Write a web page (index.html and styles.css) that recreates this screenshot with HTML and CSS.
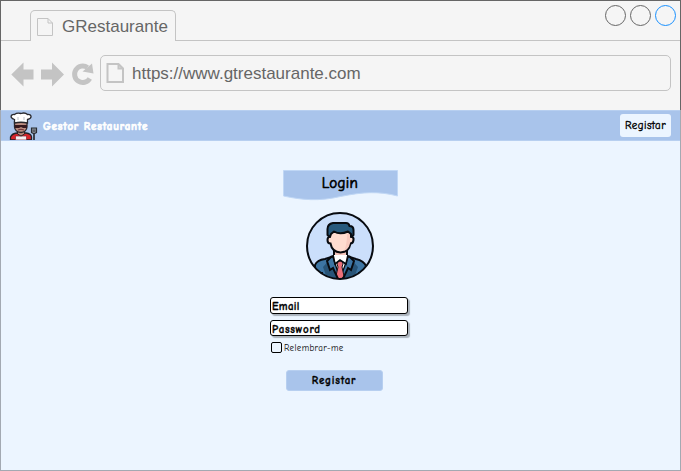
FILE: index.html
```
<!DOCTYPE html>
<html lang="pt">
<head>
<meta charset="utf-8">
<title>GRestaurante</title>
<link rel="stylesheet" href="styles.css">
</head>
<body>
<div class="window">
  <header class="chrome">
    <div class="tabs">
      <div class="tab">
        <svg class="tab-icon" width="17" height="20" viewBox="0 0 17 20"><path d="M.5 1.500H11L15.500 6V18.500H.5ZM11 1.500V6H15.500"/></svg>
        <span>GRestaurante</span>
      </div>
      <div class="tab-rest">
        <i class="circle"></i><i class="circle"></i><i class="circle active"></i>
      </div>
    </div>
    <div class="toolbar">
      <svg class="nav" width="88" height="28" viewBox="0 0 88 28">
        <path d="M.3 14.500 12.500 2.500V9.500H22.500V19.500H12.500V26.500Z"/>
        <path d="M53 14.500 41 2.500V9.500H30V19.500H41V26.500Z"/>
        <path class="reload" d="M78.800 18.500A8.200 8.200 0 1 1 76.500 7.500"/>
        <path d="M81 3.500 82.500 13.500 71.500 11.500Z"/>
      </svg>
      <div class="address">
        <svg class="page-icon" width="19" height="22" viewBox="0 0 19 22"><path d="M1.500 2H12.500L17 6.500V20H1.500ZM12.500 2V6.500H17"/></svg>
        <span>https://www.gtrestaurante.com</span>
      </div>
    </div>
  </header>
  <div class="page">
  <div class="appbar">
    <svg class="chef" width="30" height="28" viewBox="0 0 30 28">
      <path d="M1.500 28V25Q3 21.500 8 21H17Q22 21.500 22.500 25V28Z" fill="#d9242b" stroke="#202228" stroke-width="1.300"/>
      <path d="M6.500 28V24H17.500V28Z" fill="#f4eff3" stroke="#8e1e2b" stroke-width=".7"/>
      <path d="M8.500 19H15.500V22L12 24 8.500 22Z" fill="#b98579" stroke="#292529"/>
      <path d="M5.500 10H18V15Q17.500 20 12 20.500 6 20 5.500 15Z" fill="#b98c80" stroke="#29272c" stroke-width="1.300"/>
      <path d="M6 13H18V16H14L12 15 10 16H6Z" fill="#35181e"/>
      <path d="M9 18Q12 16.500 15 18" fill="none" stroke="#6b3035"/>
      <path d="M5.500 11V7.500C.5 6 1.500 2 5.500 2.500 8 .5 10 1 12 1.500 15 .5 17 1 18.500 2.500 23 2 23.500 6.500 18.500 7.500V11Q12 9.500 5.500 11Z" fill="#fff" stroke="#29292e" stroke-width="1.300"/>
      <path d="M9 5V8M15 5V8" stroke="#bbc0c8" fill="none"/>
      <path d="M22.500 16H27.500V20.500Q25 22.500 22.500 20.500Z" fill="#8b929b" stroke="#292c32" stroke-width="1.200"/>
      <path d="M24.200 17.500V20M25.800 17.500V20" stroke="#292c32" stroke-width=".7"/>
      <path d="M25 21.500V28" stroke="#292c32" stroke-width="1.700"/>
    </svg>
    <span class="brand">Gestor Restaurante</span>
    <button class="register-small">Registar</button>
  </div>
  <main>
    <div class="banner">
      <svg class="wave" width="115" height="32" viewBox="0 0 115 32"><path d="M.5.500H114.500V26C96 21 79 22 57.500 26.500 36 31.500 19 30 .5 26Z"/></svg>
      <span>Login</span>
    </div>
    <svg class="avatar" width="70" height="70" viewBox="0 0 70 70">
      <defs><clipPath id="disc"><circle cx="35" cy="35" r="33"/></clipPath></defs>
      <circle cx="35" cy="35" r="33" fill="#cbdffb"/>
      <g clip-path="url(#disc)">
        <path d="M48 0A40 40 0 0 1 53 64L70 70V0Z" fill="#bdd5f8"/>
        <path d="M10 70V54Q12 49 20 48L29 45 35 50 42 45 51 48Q59 50 61 55V70Z" fill="#3d75a3" stroke="#080b10" stroke-width="2"/>
        <path d="M29 38V46L35 52 42 46V38Z" fill="#f5c5bb" stroke="#080b10" stroke-width="2"/>
        <path d="M28 46 35 68 43 46 35 50Z" fill="#fff" stroke="#080b10" stroke-width="1.300"/>
        <path d="M33 50H37.500L38 53 37 56 39 65 35 70 31 65 33 56 32 53Z" fill="#ed7079" stroke="#15151b" stroke-width="1"/>
        <path d="M27 46 22 50 25 59 28 57 34 70H23L18 56ZM44 46 49 50 46 59 43 57 37 70H48L53 56Z" fill="#285477"/>
        <path d="M27 45 22 50 25 59 28 57 34 70M44 45 49 50 46 59 43 57 37 70" fill="none" stroke="#080b10" stroke-width="2"/>
        <path d="M28 44 30 53 35 49 41 53 43 44" fill="#fff" stroke="#080b10" stroke-width="1.700"/>
        <path d="M17 61V68M54 61V68" stroke="#080b10" stroke-width="2"/>
      </g>
      <path d="M25 21H46V25.500Q49 26 48.500 29 48 32.500 45.500 32.500 44 41 35.500 41.500 27 41 25.500 32.500 22.500 32.500 22.500 29 22.500 26 25 25.500Z" fill="#ffdcd0" stroke="#080b10" stroke-width="2"/>
      <path d="M42 23H45V32Q44 38 39 40 42 34 42 23Z" fill="#f8cabf"/>
      <path d="M25 26 22.500 24V18Q22.500 13 28 12H41Q44 12 44.500 15 48.500 15 48.500 19V24L46 26V23L43 20.500Q35 24 29 20.500L26 23Z" fill="#285a7d" stroke="#080b10" stroke-width="2" stroke-linejoin="round"/>
      <circle cx="35" cy="35" r="33" fill="none" stroke="#080b10" stroke-width="2"/>
    </svg>
    <form class="form">
      <div class="field"><span class="email">Email</span></div>
      <div class="field"><span class="password">Password</span></div>
      <label class="remember"><i class="check"></i><span>Relembrar-me</span></label>
    </form>
    <button class="register">Registar</button>
  </main>
  </div>
</div>
</body>
</html>
```
FILE: styles.css
```
* { box-sizing: border-box; }
body { margin: 0; font-family: "Comic Sans MS", "Comic Neue", Lato, sans-serif; color: #000; }
button { padding: 0; border: 0; font-family: inherit; color: inherit; }
svg { display: block; flex: none; }
.window { width: 681px; height: 471px; background: #ecf5ff; display: flex; flex-direction: column; overflow: hidden; }
.chrome { height: 110px; flex: none; border: 1px solid #666; border-bottom: 0; background: #f5f5f5; font-family: "Liberation Sans", Arial, sans-serif; color: #666; font-size: 17px; }
.page { flex: 1; display: flex; flex-direction: column; border: 1px solid #a3a9b2; border-top: 0; }
.tabs { height: 40px; padding-top: 9px; display: flex; }
.tabs::before { content: ""; width: 29px; border-bottom: 1px solid #c4c4c4; }
.tab { width: 146px; border: 1px solid #c4c4c4; border-bottom: 0; border-radius: 5px 5px 0 0; display: flex; align-items: center; padding: 1px 0 0 6px; gap: 8px; }
.tab-icon path { fill: none; stroke: #c4c4c4; }
.tab-rest { flex: 1; border-bottom: 1px solid #c4c4c4; display: flex; justify-content: flex-end; gap: 4px; padding-right: 4px; }
.circle { width: 21px; height: 21px; border: 1px solid #666; border-radius: 50%; margin-top: -5px; }
.circle.active { border-color: #1890ff; }
.toolbar { display: flex; padding: 14px 9px 0 10px; gap: 1px; }
.nav { margin-top: 5px; fill: #c4c4c4; }
.nav .reload { fill: none; stroke: #c4c4c4; stroke-width: 5; }
.address { flex: 1; height: 36px; border: 1px solid #c4c4c4; border-radius: 5px; display: flex; align-items: center; gap: 7px; padding-left: 5px; }
.address span { padding-top: 1px; }
.page-icon path { fill: none; stroke: #c4c4c4; stroke-width: 2; }
.appbar { height: 31px; flex: none; background: #a9c4eb; border: solid #b7cff0; border-width: 1px 0; display: flex; align-items: center; padding: 0 9px 0 8px; }
.brand { margin: 2px 0 0 4px; color: #fff; font-size: 11px; font-weight: 700; letter-spacing: .8px; -webkit-text-stroke: .7px #fff; }
.register-small { margin-left: auto; width: 51px; height: 23px; border-radius: 3px; background: #ecf5ff; font-size: 11px; letter-spacing: .4px; -webkit-text-stroke: .35px #000; }
main { flex: 1; display: flex; flex-direction: column; align-items: center; padding: 29px 1px 0 0; }
.banner { display: grid; width: 115px; height: 32px; }
.banner > * { grid-area: 1 / 1; }
.banner span { justify-self: center; font-size: 15px; line-height: 26px; letter-spacing: .3px; -webkit-text-stroke: .65px #000; z-index: 1; }
.wave path { fill: #a9c4eb; stroke: #c0d7f5; }
.avatar { margin-top: 9px; }
.form { width: 138px; margin: 16px 2px 0 0; display: flex; flex-direction: column; gap: 6px; }
.field { height: 17px; border: 1px solid #000; border-radius: 3px; background: #fff; box-shadow: 2px 2px 1px #aab2bb; font-size: 11px; font-weight: 700; line-height: 17px; padding-left: 1px; letter-spacing: .3px; -webkit-text-stroke: .3px #000; }
.field + .field { height: 16px; letter-spacing: .65px; }
.remember { display: flex; align-items: center; gap: 2px; height: 11px; font-size: 9px; letter-spacing: .35px; padding-left: 1px; }
.check { width: 11px; height: 11px; border: 1px solid #000; border-radius: 2px; }
.register { width: 97px; height: 21px; margin: 17px 0 0 -12px; border: 1px solid #b7cff0; border-radius: 3px; background: #a9c4eb; font-size: 11px; font-weight: 700; line-height: 20px; letter-spacing: .75px; -webkit-text-stroke: .3px #000; }
```
